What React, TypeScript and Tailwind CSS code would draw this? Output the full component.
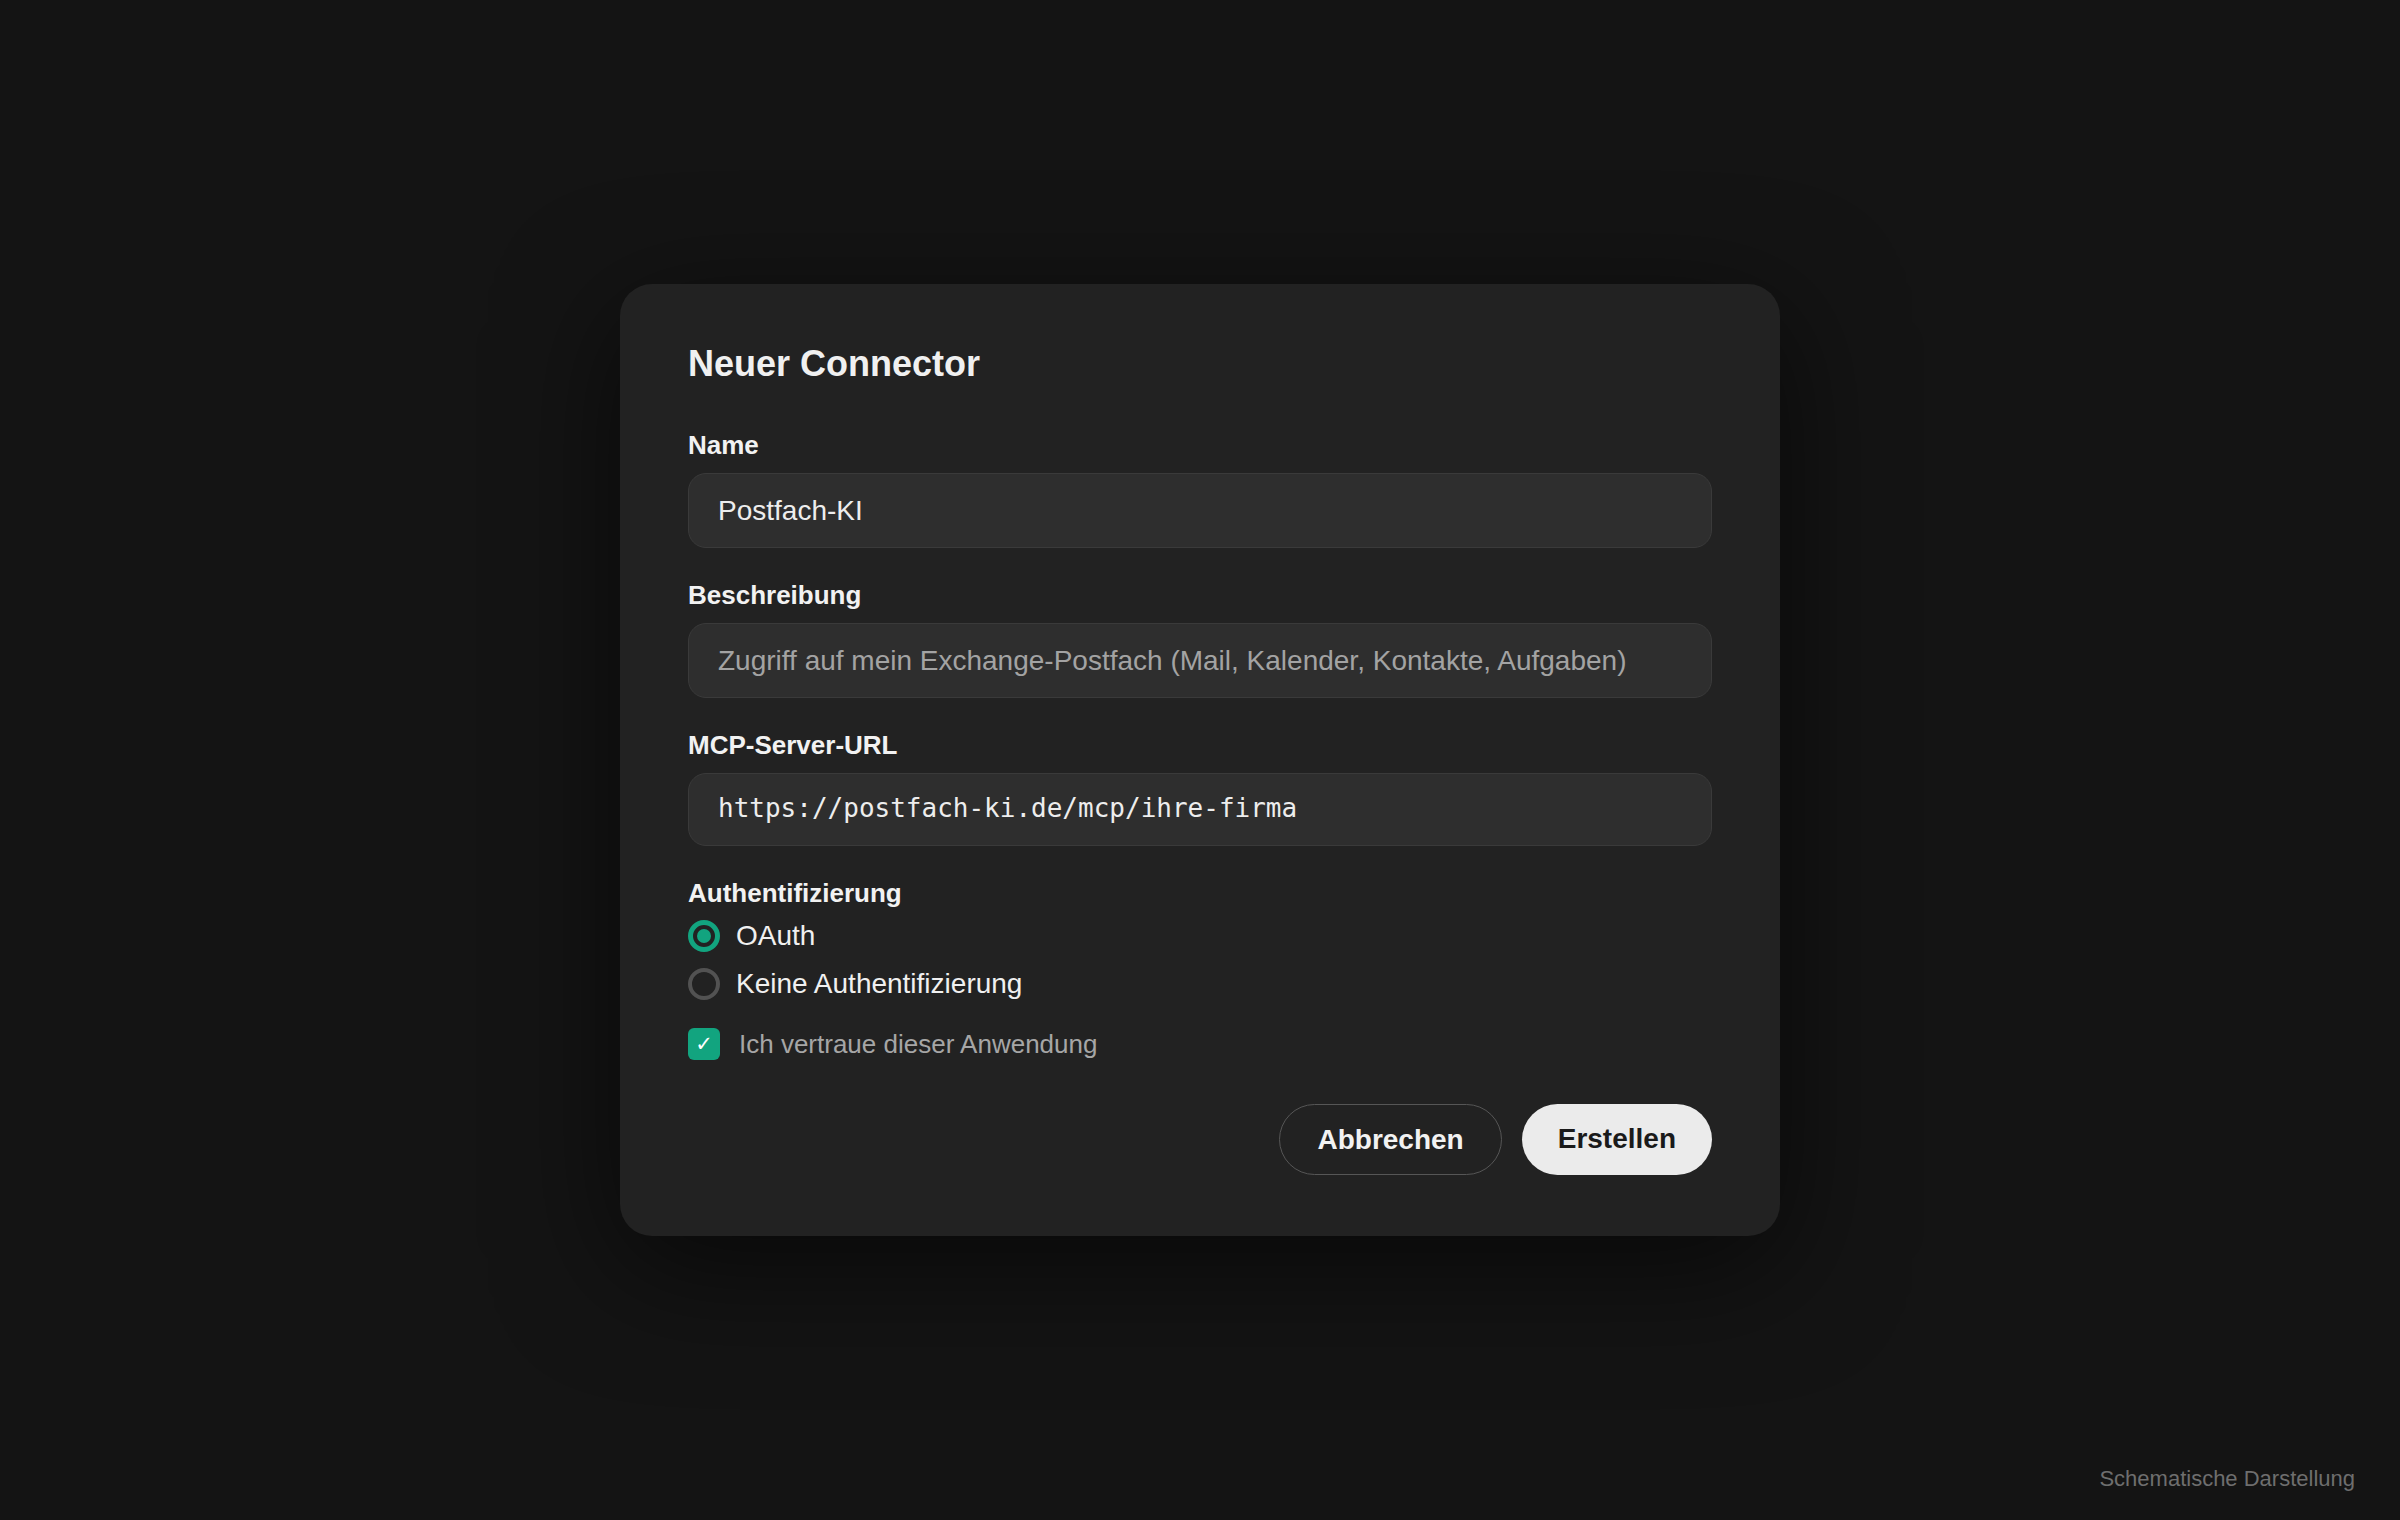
import { useState } from "react";

type Auth = "oauth" | "none";

const labelCls = "block text-[26px] leading-[32px] font-bold text-[#f2f2f2] mb-[12px]";
const inputCls =
  "w-full rounded-[18px] border border-[#3a3a3a] bg-[#2e2e2e] pl-[29px] pr-[28px] text-[28px] text-[#ededed] outline-none placeholder:text-[#a3a3a3]";

function Radio({
  checked,
  label,
  onSelect,
}: {
  checked: boolean;
  label: string;
  onSelect: () => void;
}) {
  return (
    <button type="button" onClick={onSelect} className="flex h-[48px] items-center text-left">
      <span
        className={
          checked
            ? "flex h-[32px] w-[32px] items-center justify-center rounded-full border-[5px] border-[#12a47f]"
            : "flex h-[32px] w-[32px] items-center justify-center rounded-full border-[4px] border-[#525252]"
        }
      >
        {checked && <span className="h-[14px] w-[14px] rounded-full bg-[#12a47f]" />}
      </span>
      <span className="ml-[16px] text-[28px] leading-[32px] text-[#f0f0f0]">{label}</span>
    </button>
  );
}

export default function App() {
  const [auth, setAuth] = useState<Auth>("oauth");
  const [trusted, setTrusted] = useState(true);

  return (
    <div className="relative flex h-screen w-full items-center justify-center bg-[#141414] font-['Liberation_Sans',Arial,sans-serif]">
      <div className="w-[1160px] rounded-[32px] bg-[#222222] px-[68px] pt-[58px] pb-[61px] shadow-[0_30px_120px_rgba(0,0,0,0.6)]">
        <h2 className="mb-[43px] text-[36px] leading-[44px] font-bold text-[#f0f0f0]">Neuer Connector</h2>

        <label className={labelCls}>Name</label>
        <input readOnly value="Postfach-KI" className={`${inputCls} h-[75px]`} />

        <label className={`${labelCls} mt-[31px]`}>Beschreibung</label>
        <input
          readOnly
          placeholder="Zugriff auf mein Exchange-Postfach (Mail, Kalender, Kontakte, Aufgaben)"
          className={`${inputCls} h-[75px]`}
        />

        <label className={`${labelCls} mt-[31px]`}>MCP-Server-URL</label>
        <input
          readOnly
          value="https://postfach-ki.de/mcp/ihre-firma"
          className={`${inputCls} h-[73px] pb-[3px] font-['DejaVu_Sans_Mono',monospace] !text-[26px]`}
        />

        <div className={`${labelCls} mt-[31px] !mb-0`}>Authentifizierung</div>
        <div className="mt-[3px] flex flex-col">
          <Radio checked={auth === "oauth"} label="OAuth" onSelect={() => setAuth("oauth")} />
          <Radio checked={auth === "none"} label="Keine Authentifizierung" onSelect={() => setAuth("none")} />
        </div>

        <button
          type="button"
          onClick={() => setTrusted(!trusted)}
          className="mt-[20px] flex h-[32px] items-center"
        >
          <span
            className={
              trusted
                ? "flex h-[32px] w-[32px] items-center justify-center rounded-[6px] bg-[#12a47f] text-[21px] font-bold leading-none text-white font-['DejaVu_Sans',sans-serif]"
                : "flex h-[32px] w-[32px] items-center justify-center rounded-[6px] border-[3px] border-[#525252]"
            }
          >
            {trusted ? "✓" : ""}
          </span>
          <span className="ml-[19px] text-[26px] leading-[32px] text-[#a6a6a6]">Ich vertraue dieser Anwendung</span>
        </button>

        <div className="mt-[44px] flex justify-end gap-[20px]">
          <button
            type="button"
            className="h-[71px] rounded-full border-[1.5px] border-[#565656] px-[37px] text-[28px] font-bold text-[#f2f2f2]"
          >
            Abbrechen
          </button>
          <button
            type="button"
            className="h-[71px] rounded-full bg-[#ebebeb] px-[36px] pb-[2px] text-[28px] font-bold text-[#1a1a1a]"
          >
            Erstellen
          </button>
        </div>
      </div>

      <div className="absolute right-[45px] bottom-[28px] text-[22px] leading-[26px] text-[#6e6e6e]">
        Schematische Darstellung
      </div>
    </div>
  );
}
